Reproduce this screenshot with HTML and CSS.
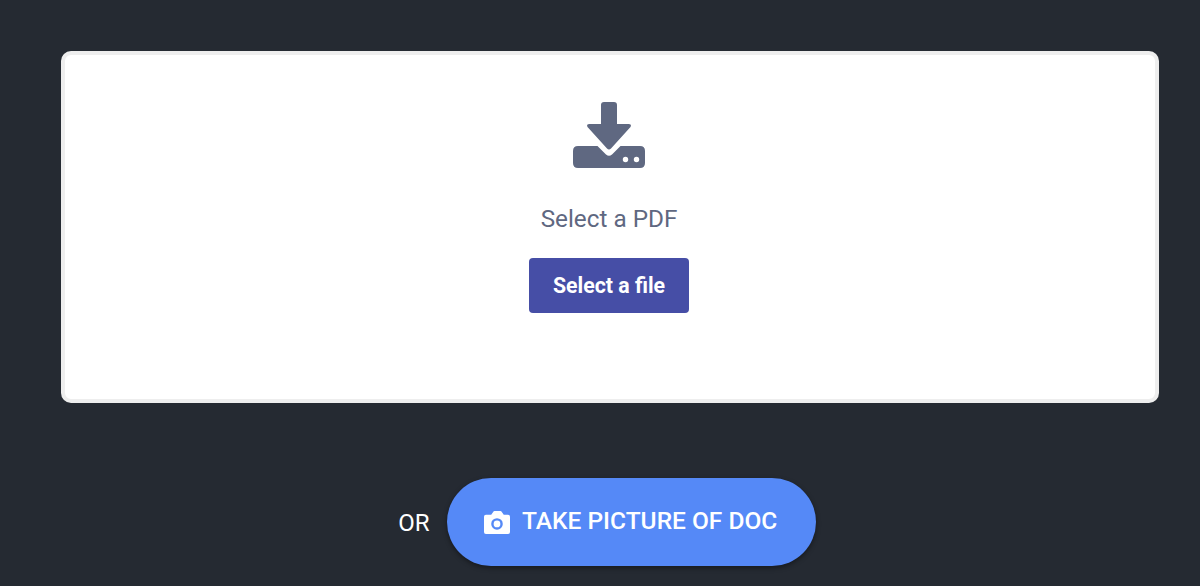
FILE: index.html
```html
<!DOCTYPE html>
<html lang="en">
<head>
  <meta charset="UTF-8">
  <meta name="viewport" content="width=device-width, initial-scale=1">
  <title>Select a PDF</title>
  <link rel="stylesheet" href="styles.css">
</head>
<body>
  <main class="page">
    <section class="drop-zone">
      <svg class="drop-icon" width="72" height="66" viewBox="0 0 72 66" aria-hidden="true">
        <path class="fill" d="M5 44H24.500L33 52.500Q36 55 39 52.500L47.500 44H67Q72 44 72 49V61Q72 66 67 66H5Q0 66 0 61V49Q0 44 5 44Z"/>
        <path class="fill" d="M31 0H41Q44 0 44 3V22H55.500Q59 22 57.500 25L38 46.500Q36 48.500 34 46.500L14.500 25Q13 22 16.500 22H28V3Q28 0 31 0Z"/>
        <circle class="hole" cx="52.500" cy="57.500" r="2.700"/>
        <circle class="hole" cx="63.500" cy="57.500" r="2.700"/>
      </svg>
      <p class="drop-label">Select a PDF</p>
      <button class="select-btn">Select a file</button>
    </section>

    <div class="alt-row">
      <span class="or-label">OR</span>
      <button class="camera-btn">
        <svg class="camera-icon" width="26" height="23" viewBox="0 0 27 24" preserveAspectRatio="none" aria-hidden="true">
          <path fill="#fff" fill-rule="evenodd" d="M2 4H7.500L9.500 1Q10 0 11 0H17Q18 0 18.500 1L20.500 4H25Q27 4 27 6V22Q27 24 25 24H2Q0 24 0 22V6Q0 4 2 4ZM13.500 7.500A6 6 0 1 0 13.500 19.500A6 6 0 1 0 13.500 7.500ZM13.500 10A3.500 3.500 0 1 1 13.500 17A3.500 3.500 0 1 1 13.500 10Z"/>
        </svg>
        <span class="camera-text">TAKE PICTURE OF DOC</span>
      </button>
    </div>
  </main>
</body>
</html>
```

FILE: styles.css
```css
* { margin: 0; padding: 0; box-sizing: border-box; }

body {
  background-color: #252a32;
  font-family: Roboto, "Liberation Sans", sans-serif;
  overflow: hidden;
}

.page {
  height: 586px;
  padding: 51px 41px 0 61px;
}

.drop-zone {
  height: 352px;
  padding: 47px 2px 0 0;
  background-color: #fff;
  border: 4px solid #eeeeee;
  border-radius: 10px;
  display: flex;
  flex-direction: column;
  align-items: center;
}

.drop-icon .fill { fill: #5f6881; }
.drop-icon .hole { fill: #fff; }

.drop-label {
  margin-top: 36px;
  font-size: 24.300px;
  line-height: 30px;
  color: #5f6881;
}

.select-btn {
  margin-top: 24px;
  width: 160px;
  height: 55px;
  background-color: #464ea6;
  color: #fff;
  border: none;
  border-radius: 4px;
  font-family: inherit;
  font-size: 21.300px;
  font-weight: 700;
}

.alt-row {
  margin-top: 75px;
  display: flex;
  align-items: center;
  justify-content: center;
  gap: 17px;
  padding-right: 6px;
}

.or-label {
  padding-top: 2px;
  color: #fff;
  font-size: 24px;
}

.camera-btn {
  width: 369px;
  height: 88px;
  padding-right: 1px;
  background-color: #5589f7;
  color: #fff;
  border: none;
  border-radius: 44px;
  box-shadow: 0 2px 5px rgba(0, 0, 0, 0.4);
  font-family: inherit;
  font-size: 24.500px;
  font-weight: 500;
  display: flex;
  align-items: center;
  justify-content: center;
  gap: 12px;
}

.camera-text {
  margin-bottom: 3px;
}
```
